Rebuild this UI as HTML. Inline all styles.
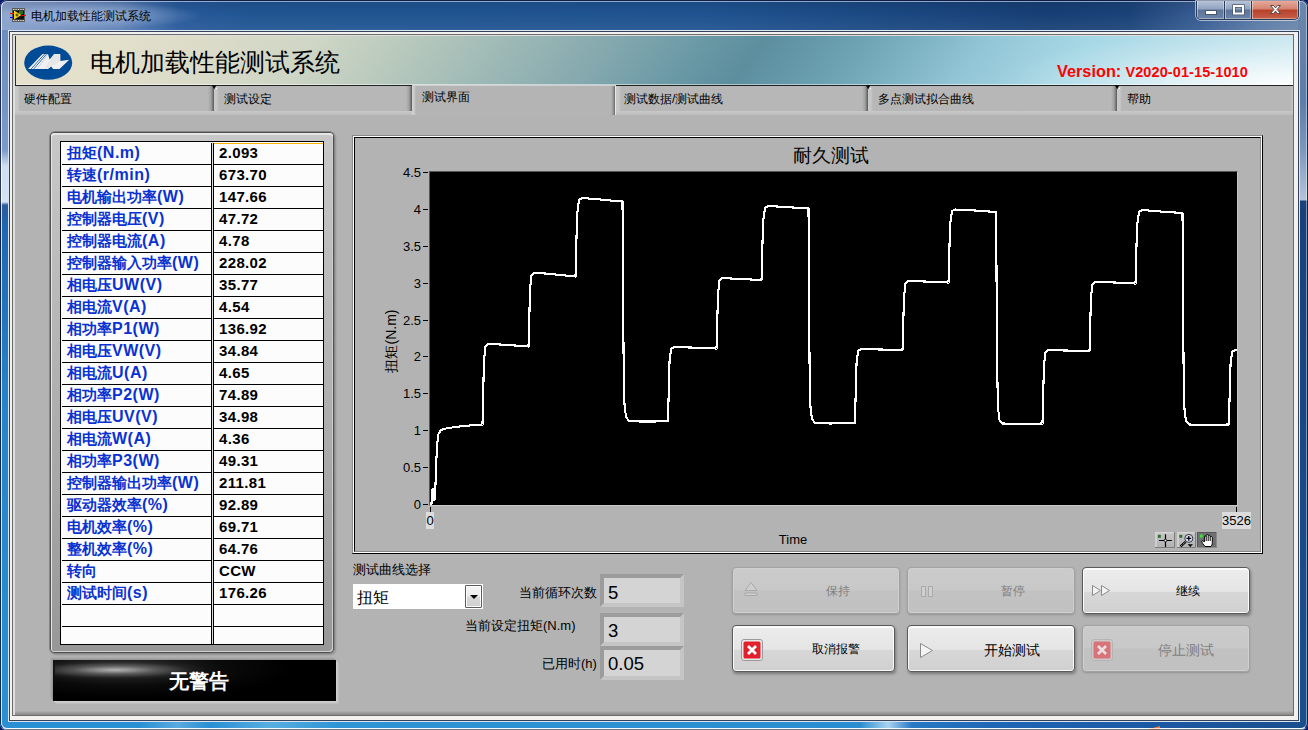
<!DOCTYPE html>
<html lang="zh">
<head>
<meta charset="utf-8">
<title>电机加载性能测试系统</title>
<style>
*{box-sizing:border-box;margin:0;padding:0}
html,body{width:1308px;height:730px;overflow:hidden;background:#0b1c6e;font-family:"Liberation Sans",sans-serif;font-size:12px;line-height:1}
.abs,#win div,#win svg{position:absolute}
#win{position:absolute;left:0;top:0;width:1308px;height:730px;border-radius:7px;overflow:hidden;
 background:linear-gradient(90deg,#8aa2cb 0,#7893c2 60px,#5c80b6 120px,#3f6ba8 150px,#28599a 178px,#205592 250px,#1f5390 700px,#1a4780 900px,#173f75 1050px,#1b4379 1130px,#385d93 1200px,#5b7ba7 1260px,#6c87ab 1300px)}
#tbv{left:0;top:0;width:1308px;height:30px;background:linear-gradient(rgba(0,0,20,.12) 0,rgba(0,0,0,0) 45%,rgba(255,255,255,.06) 100%)}
#bl{left:0;top:30px;width:9px;height:700px;background:linear-gradient(#6d8cc0 0,#7594c6 70px,#7b9bcb 120px,#cfdef0 136px,#d6e3f0 172px,#2d5c9a 175px,#1f66b0 195px,#2683c8 370px,#2a90d3 690px)}
#br{left:1298px;top:0;width:10px;height:730px;background:linear-gradient(#6c87ab 0,#5d7ca7 100px,#7e98bb 150px,#b4c4da 200px,#1a4178 201px,#1a4a88 500px,#1a4f8e 730px)}
#bb{left:0;top:720px;width:1308px;height:10px;background:linear-gradient(90deg,#2a90d3 0,#2a90d3 140px,#5aaade 178px,#2a8fd2 210px,#58aee0 270px,#2f93d4 340px,#2a8dcf 860px,#a8d4f0 888px,#2878c4 912px,#1f66b4 1000px,#1c59a4 1150px,#1a4f8e 1300px)}
#bbl{left:0;top:728px;width:1308px;height:2px;background:linear-gradient(#e8f2fa 0,#e8f2fa 50%,#9fb4c8 50%,#9fb4c8 100%)}
#orn{left:1146px;top:726px;width:0;height:0;border-left:14px solid transparent;border-bottom:4px solid #f07a3a}
#edge0{left:0;top:0;width:1308px;height:730px;border:1px solid rgba(12,24,64,.85);border-radius:7px;border-bottom-color:rgba(40,60,90,.5)}
#edge{left:1px;top:1px;width:1306px;height:728px;border:1px solid rgba(255,255,255,.8);border-radius:6px;border-right-color:rgba(255,255,255,.45);border-top-color:rgba(225,235,250,.6)}
#glow{left:4px;top:2px;width:200px;height:27px;background:radial-gradient(ellipse at 45% 50%,rgba(205,218,240,.55),rgba(205,218,240,0) 70%)}
#tbtxt{left:31px;top:9px;font-size:12px;line-height:15px;color:#000;white-space:nowrap}
/* caption buttons */
#cap{left:1196px;top:1px;width:103px;height:19px;border:1px solid #2b3c58;border-top:none;border-radius:0 0 5px 5px;overflow:hidden;box-shadow:0 0 0 1px rgba(255,255,255,.55)}
#cap div{top:0;height:18px;box-shadow:inset 1px 0 0 rgba(255,255,255,.45),inset -1px -1px 0 rgba(255,255,255,.35)}
#bmin{left:0;width:28px;background:linear-gradient(#b7c4d8 0,#8fa2bf 45%,#5b7499 50%,#6b84a8 100%);border-right:1px solid #2b3c58}
#bmax{left:28px;width:27px;background:linear-gradient(#b7c4d8 0,#8fa2bf 45%,#5b7499 50%,#6b84a8 100%);border-right:1px solid #2b3c58}
#bcls{left:55px;width:46px;background:linear-gradient(#e6aa9b 0,#d5826f 45%,#b8402b 50%,#c5614a 100%)}
/* client frame */
#cf{left:8px;top:30px;width:1292px;height:692px;background:#d9e5f3}
#cf2{left:9px;top:31px;width:1290px;height:690px;background:#34425b}
#cf3{left:10px;top:32px;width:1288px;height:688px;background:#f3f1ef}
#cf4{left:12px;top:34px;width:1282px;height:682px;background:#6c6c6c}
#cf5{left:13px;top:35px;width:1280px;height:680px;border-left:2px solid #dedede;border-top:1px solid #dedede;background:#b3b3b3}
#botsh{left:15px;top:711px;width:1278px;height:4px;background:linear-gradient(#b0b0b0,#858585)}
/* header */
#hdr{left:15px;top:36px;width:1278px;height:49px;background:linear-gradient(127deg,#e5e1cc 1.40%,#e2dfcb 9.01%,#d9dac8 16.61%,#cfd6c5 23.08%,#b6c8bc 30.68%,#9cb8b5 38.29%,#84a8ae 45.89%,#6d9ba7 51.60%,#5c8e9e 57.30%,#6fa5b5 65.29%,#93c6d6 74.41%,#a7d8e6 82.02%,#b7dfea 89.62%,#c9e7ef 98.60%)}
#hdrw{left:0;top:0;width:1278px;height:49px;background:radial-gradient(ellipse 300px 55px at 100% 100%,rgba(255,255,255,.97) 0,rgba(255,255,255,.55) 38%,rgba(255,255,255,.16) 75%,rgba(255,255,255,0) 100%)}
#hdrh{left:16px;top:84px;width:1277px;height:1px;background:rgba(255,255,255,.5)}
#hdrl{left:15px;top:36px;width:1px;height:50px;background:#1d2f55}
#hdrb{left:15px;top:85px;width:1278px;height:1px;background:#222}
#title{left:90px;top:47px;font-size:25px;line-height:30px;color:#000;white-space:nowrap}
#ver{left:1057px;top:61px;font-size:14.5px;line-height:20px;font-weight:bold;color:#f00;white-space:nowrap;letter-spacing:.1px}
#ver b{font-size:16.3px;letter-spacing:0}
/* tabs */
.tab{top:86px;height:25px;background:linear-gradient(90deg,#cacaca 0,#c6c6c6 3px,#b7b7b7 5px,#b7b7b7 calc(100% - 6px),#a2a2a2 calc(100% - 3px),#8a8a8a calc(100% - 2px),#585858 100%);font-size:12px;line-height:26px;padding-left:10px;color:#000;white-space:nowrap}
#tabsel{left:412px;top:85px;width:204px;height:30px;background:linear-gradient(90deg,#d2d2d2 0,#cbcbcb 2px,#b4b4b4 4px,#b4b4b4 calc(100% - 5px),#9a9a9a calc(100% - 3px),#6a6a6a calc(100% - 1px),#e8e8e8 calc(100% - 1px),#e8e8e8 100%);border-top:1px solid #d0d0d0;font-size:12px;line-height:22px;padding-left:10px}
.strip{top:111px;height:4px;background:linear-gradient(#c9c9c9,#bcbcbc)}
/* table panel */
#tp{left:49px;top:131px;width:286px;height:523px;border-radius:6px;background:#868686;box-shadow:1px 1px 2px rgba(0,0,0,.18)}
#tp2{left:51px;top:133px;width:282px;height:519px;border-radius:4px;background:linear-gradient(#c8c8c8,#979797);box-shadow:0 0 0 1px #505050,inset 1px 1px 0 #e6e6e6,inset 0 2px 0 rgba(255,255,255,.55),inset -1px -1px 0 #cfcfcf}
#tb{left:60px;top:141px;width:264px;height:504px;background:#fcfcfc;border:1px solid #000;overflow:hidden}
#tb .r{left:0;width:262px;border-bottom:1px solid #000}
#tb .c1{left:0;top:0;width:150px;height:100%;padding-left:6px;font-size:15px;line-height:20px;font-weight:bold;color:#0a32d2;white-space:nowrap;overflow:hidden}
#tb .c1 span{font-size:16px;letter-spacing:.5px}
#tb .c2{left:152px;top:0;width:110px;height:100%;padding-left:6px;font-size:15px;letter-spacing:.35px;line-height:20px;font-weight:bold;color:#000;white-space:nowrap}
#cd1{left:150px;top:1px;width:1px;height:504px;background:#000}
#cd2{left:152px;top:1px;width:1px;height:504px;background:#000}
#cdw{left:151px;top:0;width:1px;height:504px;background:#ddd}
#sel{left:153px;top:1px;width:109px;height:1px;background:#f5b200}
/* alarm */
#alf{left:50px;top:657px;width:289px;height:47px;background:linear-gradient(135deg,#8c8c8c 0,#9a9a9a 49%,#c8c8c8 51%,#cacaca 100%)}
#alf2{left:50px;top:657px;width:289px;height:47px;border-top:3px solid #979797;border-left:3px solid #979797;border-right:3px solid #c6c6c6;border-bottom:3px solid #c6c6c6}
#al{left:53px;top:660px;width:283px;height:41px;background:#000;box-shadow:-1px -1px 0 0 #989898,-2px -2px 0 0 #a2a2a2,-3px -3px 0 0 #adadad,1px 1px 0 0 #cfcfcf,2px 2px 0 0 #c7c7c7,3px 3px 0 0 #bebebe}
#ali{left:0;top:0;width:283px;height:41px;overflow:hidden}
#alh{left:2px;top:1px;width:150px;height:18px;background:radial-gradient(ellipse at 40% 50%,rgba(215,215,215,.8) 0,rgba(150,150,150,.45) 32%,rgba(80,80,80,.12) 60%,rgba(60,60,60,0) 75%)}
#alg{left:0;top:0;width:283px;height:41px;background:radial-gradient(ellipse 170px 30px at 70px 8px,rgba(85,85,85,.6),rgba(40,40,40,.25) 60%,rgba(0,0,0,0) 100%)}
#alt{left:0;top:8px;width:289px;text-align:center;font-size:20px;line-height:26px;font-weight:bold;color:#fff}
/* graph */
#g1{left:352px;top:135px;width:911px;height:419px;border:1px solid #000;border-top-color:#8a8a8a;border-left-color:#8a8a8a}
#g2{left:353px;top:136px;width:909px;height:417px;border:1px solid #fff}
#g3{left:354px;top:137px;width:907px;height:415px;border:1px solid #8a8a8a;border-top-color:#000;border-left-color:#000}
#plot{left:429px;top:171px;width:809px;height:335px;background:#000;border-left:1px solid #555;border-top:1px solid #555;border-right:1px solid #c8c8c8;border-bottom:1px solid #c8c8c8}
#gt{left:731px;top:145px;width:200px;text-align:center;font-size:19px;line-height:22px;color:#000}
.yl{left:380px;width:41px;text-align:right;font-size:13px;line-height:14px;color:#000}
.yt{left:423px;width:5px;height:1px;background:#000}
#ylab{left:291px;top:333px;width:200px;height:16px;text-align:center;font-size:14px;line-height:16px;transform:rotate(-90deg);white-space:nowrap}
.xt{width:1px;height:5px;background:#000;top:507px}
.xl{background:#dcdcdc;font-size:13px;line-height:17px;text-align:center;top:512px;height:17px}
#time{left:760px;top:532px;width:66px;text-align:center;font-size:13px;line-height:15px}
.pb{top:532px;width:20px;height:16px;background:#bdbdbd;border:1px solid #d8d8d8;border-right-color:#777;border-bottom-color:#777}
/* bottom controls */
.lbl{font-size:13px;line-height:16px;color:#000;white-space:nowrap}
#dd{left:353px;top:584px;width:130px;height:25px;background:#fff}
#ddt{left:4px;top:4px;font-size:16px;line-height:20px}
#ddb{left:112px;top:1px;width:17px;height:23px;border:1px solid #5c5c5c;border-radius:1px;background:linear-gradient(#f6f6f6 0,#ececec 48%,#d8d8d8 52%,#d0d0d0 100%);box-shadow:inset 0 0 0 1px #fff}
#ddb i{position:absolute;left:3.5px;top:9px;width:0;height:0;border-left:4px solid transparent;border-right:4px solid transparent;border-top:4.5px solid #000}
.vb{left:600px;width:84px;background:#d4d4d4;border:4px solid;border-color:#9c9c9c #c5c5c5 #c5c5c5 #9c9c9c;font-size:18.5px;padding-left:4px;color:#000}
/* buttons */
.btn{border:1px solid #5a5a5a;border-radius:4px;background:linear-gradient(#ececec 0,#e5e5e5 52%,#d7d7d7 54%,#d0d0d0 100%);box-shadow:inset 0 0 0 1px #fbfbfb,inset 0 2px 0 #fdfdfd,1px 2px 3px rgba(0,0,0,.32);font-size:12px;color:#000;text-align:center;white-space:nowrap}
.btn.dis{border-color:#a2a2a2;background:linear-gradient(#cbcbcb 0,#c8c8c8 48%,#c2c2c2 52%,#c1c1c1 100%);box-shadow:inset 0 0 0 1px #cfcfcf,0 1px 2px rgba(0,0,0,.18);color:#808080}
.btn span{position:absolute;left:0;top:0;width:100%;text-align:center}
#lgap{left:0;top:0;width:1px;height:504px;background:#fcfcfc}
</style>
</head>
<body>
<div id="win">
 <div id="tbv"></div><div id="bl"></div><div id="br"></div><div id="bb"></div><div id="bbl"></div><div id="orn"></div>
 <div id="glow"></div>
 <div id="edge0"></div><div id="edge"></div>
 <svg id="lvico" style="left:10px;top:8px" width="16" height="14" viewBox="0 0 16 14">
  <rect x="2" y="0" width="13" height="14" fill="#5a5a5a"/>
  <rect x="3" y="2.5" width="11" height="9" fill="#111"/>
  <g fill="#d8d8d8"><rect x="3" y="1" width="1.4" height="1"/><rect x="5.4" y="1" width="1.4" height="1"/><rect x="7.8" y="1" width="1.4" height="1"/><rect x="10.2" y="1" width="1.4" height="1"/><rect x="12.6" y="1" width="1.4" height="1"/>
  <rect x="3" y="12" width="1.4" height="1"/><rect x="5.4" y="12" width="1.4" height="1"/><rect x="7.8" y="12" width="1.4" height="1"/><rect x="10.2" y="12" width="1.4" height="1"/><rect x="12.6" y="12" width="1.4" height="1"/></g>
  <rect x="9" y="3" width="4" height="3" fill="#1c7a1c"/>
  <path d="M4 2.5 L11.5 7 L4 11.5 Z" fill="#f7d416"/>
  <rect x="0" y="5" width="4" height="1" fill="#f00"/><rect x="0" y="9" width="4" height="1" fill="#00f"/><rect x="11.5" y="7" width="4.5" height="1" fill="#f00"/>
  <path d="M7 5.5v3M5.5 7h3" stroke="#333" stroke-width="1"/>
 </svg>
 <div id="tbtxt">电机加载性能测试系统</div>
 <div id="cap">
  <div id="bmin"><svg style="left:8px;top:9px" width="12" height="5"><rect x=".5" y=".5" width="11" height="4" fill="#fff" stroke="#4a5568" stroke-width="1"/></svg></div>
  <div id="bmax"><svg style="left:7px;top:3px" width="13" height="12"><rect x="2" y="2" width="9" height="7.500" fill="none" stroke="#4a5568" stroke-width="3.400"/><rect x="2" y="2" width="9" height="7.500" fill="none" stroke="#fff" stroke-width="2"/></svg></div>
  <div id="bcls"><svg style="left:17px;top:3px" width="13" height="11"><path d="M1.5 1.5h3l2 2.4 2-2.4h3l-3.4 4 3.4 4h-3l-2-2.4-2 2.4h-3l3.4-4z" fill="#fff" stroke="#5a4a4a" stroke-width="1"/></svg></div>
 </div>
 <div id="cf"></div><div id="cf2"></div><div id="cf3"></div><div id="cf4"></div><div id="cf5"></div>
 <div id="botsh"></div>
 <!-- header -->
 <div id="hdr"><div id="hdrw"></div></div>
 <div id="hdrh"></div><div id="hdrl"></div><div id="hdrb"></div>
 <svg id="logo" style="left:23px;top:45px" width="50" height="36" viewBox="23 45 50 36">
  <ellipse cx="48.2" cy="62.7" rx="24" ry="17.1" fill="#004b95"/>
  <path d="M42.5 54 L48 54 L36.9 68.9 L28 68.9 Z" fill="#f4f4f4"/>
  <path d="M44.6 54 L31.2 68.9 M46.6 54 L33.8 68.9" stroke="#004b95" stroke-width=".8"/>
  <path d="M48 54 L49.6 59.5 L54.2 54 L60.2 54 L60.3 61 L69.2 59.8 L59.5 68.9 L53 68.9 L51.4 66.4 L48 68.9 L36.9 68.9 Z" fill="#f0f0f0"/>
  <path d="M54.2 54 L60.2 54 L60.3 61 L51.4 66.4 L44 68.9 Z" fill="#e2e2e2" opacity=".7"/>
 </svg>
 <div id="title">电机加载性能测试系统</div>
 <div id="ver"><b>Version:</b> V2020-01-15-1010</div>
 <!-- tabs -->
 <div class="strip" style="left:15px;width:397px"></div>
 <div class="strip" style="left:615px;width:678px"></div>
 <div class="tab" style="left:15px;width:199px;padding-left:9px">硬件配置</div>
 <div class="tab" style="left:214px;width:198px">测试设定</div>
 <div class="tab" style="left:616px;width:252px;padding-left:8px">测试数据/测试曲线</div>
 <div class="tab" style="left:868px;width:249px">多点测试拟合曲线</div>
 <div class="tab" style="left:1117px;width:176px;background:linear-gradient(90deg,#cacaca 0,#c6c6c6 3px,#b7b7b7 5px,#b7b7b7 calc(100% - 2px),#c8c8c8 100%)">帮助</div>
 <svg style="left:211px;top:85px" width="7" height="5" viewBox="0 0 7 5"><path d="M.8 0H5.600L3.200 4.200Z" fill="#0a0a0a"/><rect x="4.800" y="3" width="1.200" height="1.200" fill="#f6f6f6"/></svg>
 <svg style="left:865px;top:85px" width="7" height="5" viewBox="0 0 7 5"><path d="M.8 0H5.600L3.200 4.200Z" fill="#0a0a0a"/><rect x="4.800" y="3" width="1.200" height="1.200" fill="#f6f6f6"/></svg>
 <svg style="left:1114px;top:85px" width="7" height="5" viewBox="0 0 7 5"><path d="M.8 0H5.600L3.200 4.200Z" fill="#0a0a0a"/><rect x="4.800" y="3" width="1.200" height="1.200" fill="#f6f6f6"/></svg>
 <div id="tabsel">测试界面</div>
 <!-- table -->
 <div id="tp"></div><div id="tp2"></div>
 <div id="tb">
<div class="r" style="top:1px;height:22px"><div class="c1">扭矩<span>(N.m)</span></div><div class="c2">2.093</div></div>
<div class="r" style="top:23px;height:22px"><div class="c1">转速<span>(r/min)</span></div><div class="c2">673.70</div></div>
<div class="r" style="top:45px;height:22px"><div class="c1">电机输出功率<span>(W)</span></div><div class="c2">147.66</div></div>
<div class="r" style="top:67px;height:22px"><div class="c1">控制器电压<span>(V)</span></div><div class="c2">47.72</div></div>
<div class="r" style="top:89px;height:22px"><div class="c1">控制器电流<span>(A)</span></div><div class="c2">4.78</div></div>
<div class="r" style="top:111px;height:22px"><div class="c1">控制器输入功率<span>(W)</span></div><div class="c2">228.02</div></div>
<div class="r" style="top:133px;height:22px"><div class="c1">相电压<span>UW(V)</span></div><div class="c2">35.77</div></div>
<div class="r" style="top:155px;height:22px"><div class="c1">相电流<span>V(A)</span></div><div class="c2">4.54</div></div>
<div class="r" style="top:177px;height:22px"><div class="c1">相功率<span>P1(W)</span></div><div class="c2">136.92</div></div>
<div class="r" style="top:199px;height:22px"><div class="c1">相电压<span>VW(V)</span></div><div class="c2">34.84</div></div>
<div class="r" style="top:221px;height:22px"><div class="c1">相电流<span>U(A)</span></div><div class="c2">4.65</div></div>
<div class="r" style="top:243px;height:22px"><div class="c1">相功率<span>P2(W)</span></div><div class="c2">74.89</div></div>
<div class="r" style="top:265px;height:22px"><div class="c1">相电压<span>UV(V)</span></div><div class="c2">34.98</div></div>
<div class="r" style="top:287px;height:22px"><div class="c1">相电流<span>W(A)</span></div><div class="c2">4.36</div></div>
<div class="r" style="top:309px;height:22px"><div class="c1">相功率<span>P3(W)</span></div><div class="c2">49.31</div></div>
<div class="r" style="top:331px;height:22px"><div class="c1">控制器输出功率<span>(W)</span></div><div class="c2">211.81</div></div>
<div class="r" style="top:353px;height:22px"><div class="c1">驱动器效率<span>(%)</span></div><div class="c2">92.89</div></div>
<div class="r" style="top:375px;height:22px"><div class="c1">电机效率<span>(%)</span></div><div class="c2">69.71</div></div>
<div class="r" style="top:397px;height:22px"><div class="c1">整机效率<span>(%)</span></div><div class="c2">64.76</div></div>
<div class="r" style="top:419px;height:22px"><div class="c1">转向</div><div class="c2">CCW</div></div>
<div class="r" style="top:441px;height:22px"><div class="c1">测试时间<span>(s)</span></div><div class="c2">176.26</div></div>
<div class="r" style="top:463px;height:22px"><div class="c1"></div><div class="c2"></div></div>
<div class="r" style="top:485px;height:19px"><div class="c1"></div><div class="c2"></div></div>
  <div id="lgap"></div><div id="cdw"></div><div id="cd1"></div><div id="cd2"></div><div id="sel"></div>
 </div>
  <div id="al"><div id="ali"><div id="alg"></div><div id="alh"></div></div></div>
 <div id="alt" style="left:54px;top:668px">无警告</div>
 <!-- graph -->
 <div id="g1"></div><div id="g2"></div><div id="g3"></div>
 <div id="gt">耐久测试</div>
 <div id="plot"><svg style="left:0;top:0" width="807" height="333" viewBox="0 0 807 333"><path d="M0.0,333.0 L1.5,332.0 L2.0,318.0 L3.0,317.0 L3.5,328.0 L5.0,327.0 L6.0,298.0 L7.0,273.0 L8.5,262.0 L11.0,258.0 L16.0,256.5 L25.0,255.0 L35.0,254.0 L45.0,253.0 L52.5,252.5 L53.0,228.0 L54.0,188.0 L55.5,174.0 L58.0,172.0 L70.0,172.5 L85.0,173.5 L98.5,174.5 L99.0,158.0 L100.0,118.0 L101.5,103.0 L104.0,101.0 L115.0,101.5 L130.0,103.0 L145.5,104.5 L146.0,88.0 L147.0,43.0 L149.0,28.0 L152.0,26.0 L165.0,27.0 L180.0,28.5 L192.5,29.5 L193.0,88.0 L193.5,178.0 L194.5,233.0 L196.0,245.0 L199.0,249.0 L210.0,249.5 L225.0,249.5 L238.0,249.0 L238.5,228.0 L239.5,190.0 L241.0,177.0 L244.0,175.0 L260.0,175.5 L275.0,176.0 L286.5,176.5 L287.0,158.0 L288.0,123.0 L289.5,108.0 L292.0,106.0 L310.0,107.0 L331.5,108.0 L332.0,90.0 L333.0,50.0 L335.0,36.0 L338.0,34.0 L355.0,35.0 L378.5,36.5 L379.0,98.0 L379.5,188.0 L380.5,236.0 L382.0,247.0 L385.0,251.0 L400.0,251.5 L425.0,251.0 L425.5,228.0 L426.5,192.0 L428.0,179.0 L431.0,177.0 L450.0,177.5 L472.5,178.0 L473.0,160.0 L474.0,125.0 L475.5,111.0 L478.0,109.0 L495.0,109.5 L518.5,110.5 L519.0,93.0 L520.0,53.0 L522.0,39.0 L525.0,37.5 L545.0,38.5 L566.0,40.0 L566.5,98.0 L567.0,188.0 L568.0,236.0 L569.5,248.0 L572.5,251.5 L590.0,252.0 L612.5,251.5 L613.0,228.0 L614.0,193.0 L615.5,180.0 L618.5,178.0 L635.0,178.5 L659.5,179.0 L660.0,160.0 L661.0,125.0 L662.5,112.0 L665.0,110.0 L685.0,110.5 L705.5,111.5 L706.0,93.0 L707.0,54.0 L709.0,40.0 L712.0,38.0 L730.0,39.5 L752.5,41.0 L753.0,98.0 L753.5,188.0 L754.5,238.0 L756.0,249.0 L759.0,252.5 L775.0,253.0 L799.0,252.5 L799.5,228.0 L800.5,193.0 L802.0,180.0 L805.0,178.0 L807.0,178.0" fill="none" stroke="#fff" stroke-width="2.1" stroke-linejoin="round" shape-rendering="crispEdges"/></svg></div>
 <div class="yl" style="top:166px">4.5</div><div class="yt" style="top:172px"></div>
 <div class="yl" style="top:203px">4</div><div class="yt" style="top:209px"></div>
 <div class="yl" style="top:240px">3.5</div><div class="yt" style="top:246px"></div>
 <div class="yl" style="top:277px">3</div><div class="yt" style="top:283px"></div>
 <div class="yl" style="top:314px">2.5</div><div class="yt" style="top:320px"></div>
 <div class="yl" style="top:350px">2</div><div class="yt" style="top:356px"></div>
 <div class="yl" style="top:387px">1.5</div><div class="yt" style="top:393px"></div>
 <div class="yl" style="top:424px">1</div><div class="yt" style="top:430px"></div>
 <div class="yl" style="top:461px">0.5</div><div class="yt" style="top:467px"></div>
 <div class="yl" style="top:498px">0</div><div class="yt" style="top:504px"></div>
 <div id="ylab">扭矩(N.m)</div>
 <div class="xt" style="left:430px"></div><div class="xt" style="left:1236px"></div>
 <div class="xl" style="left:426px;width:8px">0</div>
 <div class="xl" style="left:1222px;width:29px">3526</div>
 <div id="time">Time</div>
 <svg class="pbs" style="left:1155px;top:532px" width="20" height="16" viewBox="0 0 20 16"><defs><linearGradient id="pg" x1="0" y1="0" x2="0" y2="1"><stop offset="0" stop-color="#c6c6c6"/><stop offset="1" stop-color="#b2b2b2"/></linearGradient></defs><rect width="20" height="16" fill="url(#pg)"/><path d="M1 16V.5H20" fill="none" stroke="#d6d6d6" stroke-width="1.500"/><path d="M0 15.500H19.500V0" fill="none" stroke="#7c7c7c"/><rect x="2.800" y="2.800" width="3" height="3" fill="#2f6f2f"/><path d="M10.500 2.300V15M3.900 8.500H16.800" stroke="#000" stroke-width="1.200"/><circle cx="10.500" cy="8.500" r="1.300" fill="#fff" stroke="#000" stroke-width=".8"/></svg>
 <svg class="pbs" style="left:1177px;top:532px" width="19" height="16" viewBox="0 0 19 16"><rect width="19" height="16" fill="url(#pg)"/><path d="M1 16V.5H19" fill="none" stroke="#d6d6d6" stroke-width="1.500"/><path d="M0 15.500H18.500V0" fill="none" stroke="#7c7c7c"/><rect x="2.300" y="2.800" width="3" height="3" fill="#2f6f2f"/><path d="M8.600 9.900L3.600 14.300" stroke="#000" stroke-width="2.400"/><path d="M8.300 10.200L4 14" stroke="#e8e8e8" stroke-width=".9" stroke-dasharray="1.100 1"/><circle cx="11.800" cy="6.400" r="4" fill="#dcdcff" stroke="#333" stroke-width="1"/><path d="M11.800 4v4.800M9.400 6.400h4.800" stroke="#000" stroke-width="1.300"/><path d="M10.600 12.200h5.400l-2.700 2.700z" fill="#000"/></svg>
 <svg class="pbs" style="left:1197px;top:532px" width="20" height="16" viewBox="0 0 20 16"><rect width="20" height="16" fill="#707070"/><path d="M.5 16V.5H20" fill="none" stroke="#565656"/><path d="M0 15.500H19.500V0" fill="none" stroke="#8a8a8a"/><rect x="2.800" y="2.600" width="3" height="3" fill="#3fe03f"/><path d="M8 14.500C6.500 12.500 4.300 10 4.700 9 5.300 8.200 6.500 8.900 7.400 10V4.800C7.400 3.600 9.200 3.600 9.200 4.800V3.400C9.200 2.200 11.200 2.200 11.200 3.400V3.900C11.200 2.800 13.200 2.800 13.200 3.900V5.200C13.200 4.200 15.300 4.200 15.300 5.400V10.500C15.300 12.500 14.700 13.500 14 14.500Z" fill="#fff" stroke="#000" stroke-width="1"/><path d="M9.200 4.800V9M11.200 3.900V9M13.200 5.200V9" stroke="#000" stroke-width="1"/></svg>
 <!-- controls -->
 <div class="lbl" style="left:353px;top:562px">测试曲线选择</div>
 <div id="dd"><div id="ddt">扭矩</div><div id="ddb"><i></i></div></div>
 <div class="lbl" style="left:519px;top:585px">当前循环次数</div>
 <div class="lbl" style="left:465px;top:618px">当前设定扭矩(N.m)</div>
 <div class="lbl" style="left:542px;top:656px">已用时(h)</div>
 <div class="vb" style="top:574px;height:33px;line-height:29px">5</div>
 <div class="vb" style="top:613px;height:33px;line-height:27px">3</div>
 <div class="vb" style="top:646px;height:34px;line-height:27px">0.05</div>
 <!-- buttons -->
 <div class="btn dis" style="left:732px;top:567px;width:168px;height:47px;line-height:47px"><svg style="left:10px;top:13px" width="16" height="16"><path d="M2 9.500L8 1.500L14 9.500Z M2 12h12v2.500H2z" fill="#cfcfcf" stroke="#a9a9a9" stroke-width="1"/></svg><span style="left:22px">保持</span></div>
 <div class="btn dis" style="left:907px;top:567px;width:168px;height:47px;line-height:47px"><svg style="left:12px;top:17px" width="16" height="14"><path d="M1.500 1.500h4v10h-4zM8.500 1.500h4v10h-4z" fill="#cfcfcf" stroke="#a9a9a9" stroke-width="1"/></svg><span style="left:22px">暂停</span></div>
 <div class="btn" style="left:1082px;top:567px;width:168px;height:47px;line-height:47px"><svg style="left:8px;top:16px" width="22" height="14"><path d="M1.500 1.500L9.500 6.500L1.500 11.500ZM10.500 1.500L18.500 6.500L10.500 11.500Z" fill="#f4f4f4" stroke="#8a8a8a" stroke-width="1"/></svg><span style="left:22px">继续</span></div>
 <div class="btn" style="left:732px;top:625px;width:163px;height:47px;line-height:47px"><svg style="left:8px;top:13px" width="22" height="22"><rect x=".5" y=".5" width="21" height="21" rx="2.500" fill="#e8e8e8" stroke="#9a9a9a"/><rect x="2.500" y="2.500" width="17" height="17" rx="1.500" fill="#e2202c"/><path d="M7 7l8 8M15 7l-8 8" stroke="#fff" stroke-width="2.800"/></svg><span style="left:22px">取消报警</span></div>
 <div class="btn" style="left:907px;top:625px;width:168px;height:47px;line-height:49px;font-size:14px"><svg style="left:11px;top:16px" width="16" height="18"><path d="M1.500 1.500L13.500 8.500L1.500 15.500Z" fill="#f4f4f4" stroke="#8a8a8a" stroke-width="1"/></svg><span style="left:21px">开始测试</span></div>
 <div class="btn dis" style="left:1082px;top:625px;width:168px;height:47px;line-height:48px;font-size:14px"><svg style="left:8px;top:13px" width="22" height="22"><rect x=".5" y=".5" width="21" height="21" rx="2.500" fill="#c9c9c9" stroke="#b4b4b4"/><rect x="2.500" y="2.500" width="17" height="17" rx="1.500" fill="#d9737a"/><path d="M7 7l8 8M15 7l-8 8" stroke="#e8e0e0" stroke-width="2.600"/></svg><span style="left:20px">停止测试</span></div>
</div>
</body>
</html>
